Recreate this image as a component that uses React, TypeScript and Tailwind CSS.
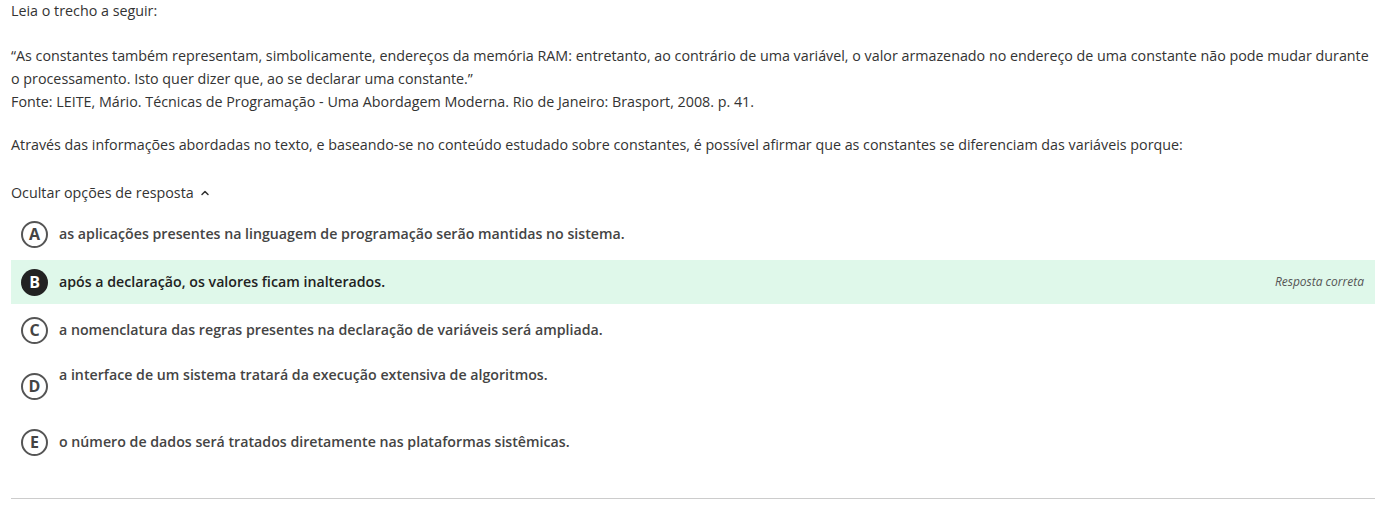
import { ChevronUpIcon } from "lucide-react";

interface Option {
  letter: string;
  text: string;
  correct?: boolean;
  tall?: boolean;
}

const options: Option[] = [
  { letter: "A", text: "as aplicações presentes na linguagem de programação serão mantidas no sistema." },
  { letter: "B", text: "após a declaração, os valores ficam inalterados.", correct: true },
  { letter: "C", text: "a nomenclatura das regras presentes na declaração de variáveis será ampliada." },
  { letter: "D", text: "a interface de um sistema tratará da execução extensiva de algoritmos.", tall: true },
  { letter: "E", text: "o número de dados será tratados diretamente nas plataformas sistêmicas." },
];

const AnswerRow = ({ option }: { option: Option }) => {
  return (
    <div
      className={`flex flex-row pl-[10px] pr-[11px] ${option.tall ? "h-[60px] items-start" : "h-[44px] items-center"} ${
        option.correct ? "bg-[#dff8ea]" : ""
      }`}
    >
      <div className={`flex items-center ${option.tall ? "h-full" : ""}`}>
        <span
          className={`w-[27px] h-[27px] rounded-full flex items-center justify-center text-[16px] font-bold shrink-0 ${
            option.correct ? "bg-[#222] text-white" : "border-2 border-[#555] text-[#444]"
          }`}
        >
          {option.letter}
        </span>
      </div>
      <span
        className={`ml-[11px] text-[14.2px] leading-[22px] font-semibold ${option.tall ? "mt-[8px]" : ""} ${
          option.correct ? "text-[#222]" : "text-[#444]"
        }`}
      >
        {option.text}
      </span>
      {option.correct && <span className="ml-auto text-[12px] italic text-[#555]">Resposta correta</span>}
    </div>
  );
};

const App = () => {
  return (
    <div
      className="w-[1381px] h-[513px] bg-white pl-[11px] pr-[6px] text-[14.3px] text-[#333]"
      style={{ fontFamily: '"Open Sans", sans-serif' }}
    >
      <p className="leading-[22px]">Leia o trecho a seguir:</p>
      <div className="mt-[22px] leading-[23px]">
        <p>
          “As constantes também representam, simbolicamente, endereços da memória RAM: entretanto, ao contrário de uma variável, o valor armazenado no endereço de uma constante não pode mudar durante o processamento. Isto quer dizer que, ao se declarar uma constante.”
        </p>
        <p>Fonte: LEITE, Mário. Técnicas de Programação - Uma Abordagem Moderna. Rio de Janeiro: Brasport, 2008. p. 41.</p>
      </div>
      <p className="mt-[21px] leading-[22px]">
        Através das informações abordadas no texto, e baseando-se no conteúdo estudado sobre constantes, é possível afirmar que as constantes se diferenciam das variáveis porque:
      </p>
      <div className="mt-[26px] h-[22px] flex items-center gap-[5px]">
        <span>Ocultar opções de resposta</span>
        <ChevronUpIcon className="w-[12px] h-[12px]" strokeWidth={3} />
      </div>
      <div className="mt-[8px] flex flex-col gap-[4px]">
        {options.map((option) => (
          <AnswerRow key={option.letter} option={option} />
        ))}
      </div>
      <div className="mt-[34px] border-t border-[#ccc]" />
    </div>
  );
};

export default App;
